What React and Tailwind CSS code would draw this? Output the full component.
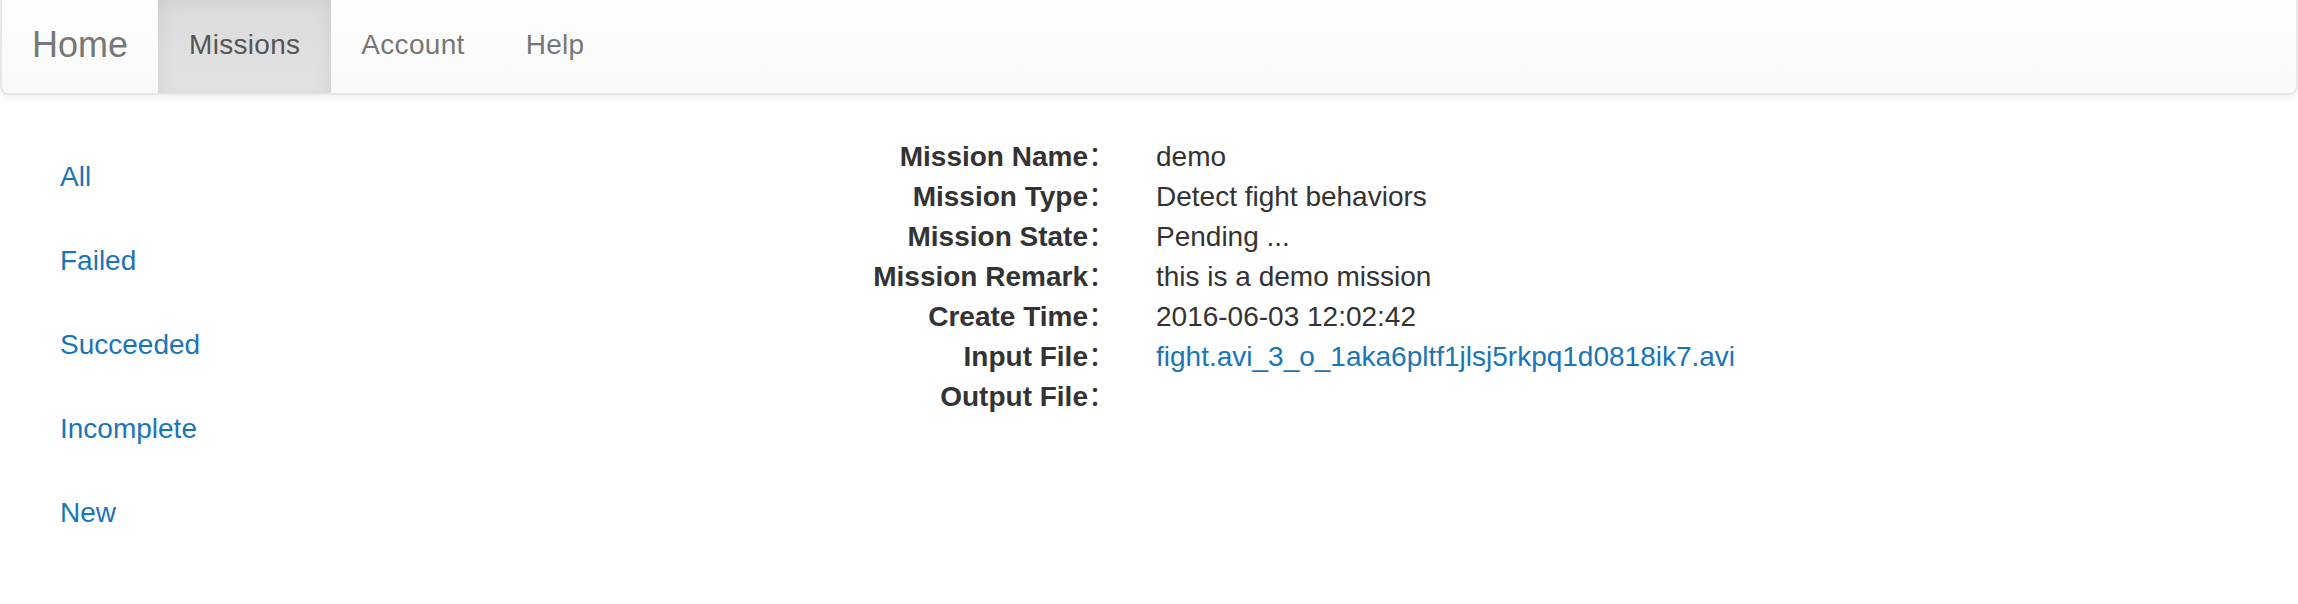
import React from "react";

const rows = [
  ["Mission Name", "demo"],
  ["Mission Type", "Detect fight behaviors"],
  ["Mission State", "Pending ..."],
  ["Mission Remark", "this is a demo mission"],
  ["Create Time", "2016-06-03 12:02:42"],
  ["Input File", "fight.avi_3_o_1aka6pltf1jlsj5rkpq1d0818ik7.avi", true],
  ["Output File", ""],
];

const side = ["All", "Failed", "Succeeded", "Incomplete", "New"];

export default function App() {
  return (
    <div className="w-[2298px] min-h-[604px] bg-white text-[#333] text-[28px] leading-[40px] font-['Liberation_Sans','Helvetica_Neue',Arial,sans-serif] overflow-hidden">
      <nav className="-mt-[7px] h-[102px] border-2 border-[#e7e7e7] rounded-[8px] bg-linear-to-b from-white to-[#f8f8f8] shadow-[0_2px_10px_rgba(0,0,0,0.075)] flex">
        <a className="block px-[30px] pt-[30px] text-[36px] leading-[40px] text-[#777]">Home</a>
        <ul className="flex h-full tracking-[0.3px]">
          <li className="h-full">
            <a className="block h-full px-[31px] pt-[30px] text-[#555] bg-linear-to-b from-[#dbdbdb] to-[#e2e2e2] shadow-[inset_0_6px_18px_rgba(0,0,0,0.075)]">Missions</a>
          </li>
          <li className="h-full">
            <a className="block h-full px-[30px] pt-[30px] text-[#777]">Account</a>
          </li>
          <li className="h-full">
            <a className="block h-full px-[31px] pt-[30px] text-[#777]">Help</a>
          </li>
        </ul>
      </nav>
      <div className="mt-[42px] flex">
        <div className="w-[383px] shrink-0 px-[30px]">
          <ul className="flex flex-col gap-[4px]">
            {side.map((s) => (
              <li key={s}>
                <a className="block px-[30px] py-[20px] text-[#1a75b8]">{s}</a>
              </li>
            ))}
          </ul>
        </div>
        <div className="flex-1 px-[30px]">
          <dl className="ml-[383px]">
            {rows.map(([k, v, link]) => (
              <div key={k} className="flex h-[40px]">
                <dt className="w-[320px] shrink-0 text-right font-bold whitespace-nowrap">
                  {k}
                  <span className="font-['Noto_Sans_CJK_SC',sans-serif] font-normal leading-none">：</span>
                </dt>
                <dd className="ml-[40px]">
                  {link ? <a className="text-[#1a75b8]">{v}</a> : v}
                </dd>
              </div>
            ))}
          </dl>
        </div>
      </div>
    </div>
  );
}
